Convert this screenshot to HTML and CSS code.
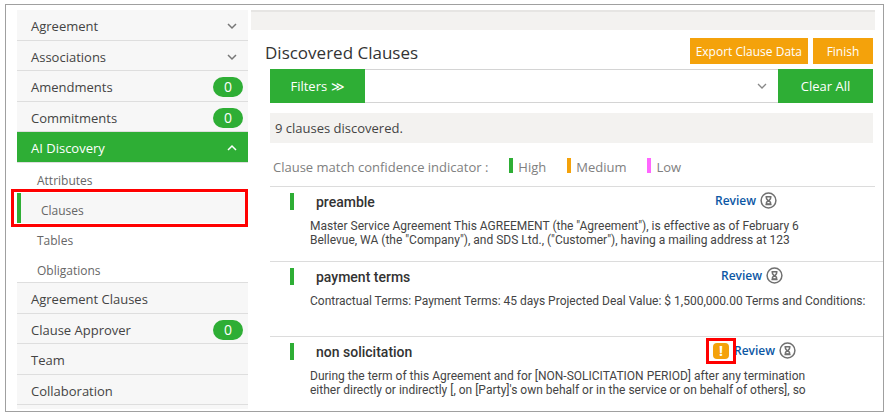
FILE: index.html
```
<!DOCTYPE html>
<html lang="en">
<head>
  <meta charset="UTF-8" />
  <meta name="viewport" content="width=device-width, initial-scale=1.0" />
  <title>Discovered Clauses</title>
  <link rel="stylesheet" href="styles.css">
</head>
<body>
  <svg class="sprite" aria-hidden="true">
    <symbol id="chevron" viewBox="0 0 10 8">
      <path d="M1 2 L5 6 L9 2" fill="none" stroke="currentColor" stroke-width="1.5" />
    </symbol>
    <symbol id="hourglass" viewBox="0 0 17 17">
      <circle cx="8.5" cy="8.5" r="7.4" fill="none" stroke="currentColor" stroke-width="1.5" />
      <path d="M5.5 4.7 H11.5 M5.5 12.5 H11.5" stroke="currentColor" stroke-width="1.6" />
      <path d="M6.5 5 V6.8 L8 8.6 L6.5 10.4 V12 H10.5 V10.4 L9 8.6 L10.5 6.8 V5" fill="none" stroke="currentColor" stroke-width="1.5" />
    </symbol>
  </svg>

  <div class="frame">
    <nav class="sidebar">
      <button class="nav-item" type="button">Agreement <svg class="chevron"><use href="#chevron" /></svg></button>
      <button class="nav-item" type="button">Associations <svg class="chevron"><use href="#chevron" /></svg></button>
      <a class="nav-item" href="#amendments">Amendments <span class="badge">0</span></a>
      <a class="nav-item" href="#commitments">Commitments <span class="badge">0</span></a>
      <button class="nav-item active" type="button">AI Discovery <svg class="chevron up"><use href="#chevron" /></svg></button>
      <div class="submenu">
        <a class="sub-item" href="#attributes">Attributes</a>
        <a class="sub-item selected" href="#clauses">Clauses</a>
        <a class="sub-item" href="#tables">Tables</a>
        <a class="sub-item" href="#obligations">Obligations</a>
      </div>
      <a class="nav-item" href="#agreement-clauses">Agreement Clauses</a>
      <a class="nav-item" href="#approver">Clause Approver <span class="badge">0</span></a>
      <a class="nav-item" href="#team">Team</a>
      <a class="nav-item" href="#collaboration">Collaboration</a>
    </nav>

    <main class="main">
      <div class="topbar"></div>
      <div class="heading">
        <h1>Discovered Clauses</h1>
        <button class="btn-orange" type="button">Export Clause Data</button>
        <button class="btn-orange" type="button">Finish</button>
      </div>
      <div class="filters">
        <button class="btn-green" type="button">Filters ≫</button>
        <select class="filter-select" aria-label="Filters">
          <option></option>
        </select>
        <button class="btn-green" type="button">Clear All</button>
      </div>
      <p class="count">9 clauses discovered.</p>
      <div class="legend">
        <span class="legend-label">Clause match confidence indicator :</span>
        <span class="level high">High</span>
        <span class="level medium">Medium</span>
        <span class="level low">Low</span>
      </div>

      <section class="clause first">
        <div class="clause-head">
          <h2>preamble</h2>
          <div class="actions">
            <a href="#review-1">Review</a>
            <svg class="hourglass"><use href="#hourglass" /></svg>
          </div>
        </div>
        <p>Master Service Agreement This AGREEMENT (the "Agreement"), is effective as of February 6<br>Bellevue, WA (the "Company"), and SDS Ltd., ("Customer"), having a mailing address at 123</p>
      </section>
      <section class="clause">
        <div class="clause-head wide">
          <h2>payment terms</h2>
          <div class="actions">
            <a href="#review-2">Review</a>
            <svg class="hourglass"><use href="#hourglass" /></svg>
          </div>
        </div>
        <p>Contractual Terms: Payment Terms: 45 days Projected Deal Value: $ 1,500,000.00 Terms and Conditions:</p>
      </section>
      <section class="clause">
        <div class="clause-head flagged">
          <h2>non solicitation</h2>
          <div class="actions">
            <span class="alert"><span class="alert-icon">!</span></span>
            <a href="#review-3">Review</a>
            <svg class="hourglass"><use href="#hourglass" /></svg>
          </div>
        </div>
        <p>During the term of this Agreement and for [NON-SOLICITATION PERIOD] after any termination<br>either directly or indirectly [, on [Party]'s own behalf or in the service or on behalf of others], so</p>
      </section>
    </main>
  </div>
</body>
</html>
```
FILE: styles.css
```
*, *::before, *::after { box-sizing: border-box; }
body {
  font-family: "Open Sans", "Noto Sans", sans-serif;
  background-color: #fff;
  color: #444;
  font-size: 13px;
  margin: 4px 8px 8px 5px;
}
button, select { font-family: inherit; }
a { text-decoration: none; }
.sprite { display: none; }
.frame {
  display: flex;
  align-items: flex-start;
  gap: 3px;
  min-height: calc(100vh - 12px);
  border: 1px solid #a0a0a0;
  padding: 5px 0 0 11px;
}

/* sidebar */
.sidebar {
  flex: 0 0 231px;
  border-bottom: 4px solid #f7f7f7;
}
.nav-item {
  display: flex;
  align-items: center;
  justify-content: space-between;
  width: 100%;
  height: 31px;
  padding: 2px 5px 0 14px;
  border: none;
  border-bottom: 1px solid #dedede;
  background-color: #f7f7f7;
  color: #444;
  font-size: 13px;
  text-align: left;
}
.nav-item:nth-child(even) { height: 30px; }
.nav-item.active {
  background-color: #2eae35;
  color: #fff;
}
.chevron {
  width: 10px;
  height: 8px;
  margin-right: 6px;
  color: #777;
}
.chevron.up {
  transform: rotate(180deg);
  color: #fff;
}
.badge {
  width: 30px;
  height: 20px;
  border-radius: 10px;
  background-color: #2eae35;
  color: #fff;
  font-size: 14px;
  line-height: 20px;
  text-align: center;
}
.submenu {
  height: 120px;
  border-bottom: 1px solid #dedede;
}
.sub-item {
  display: block;
  height: 30px;
  padding: 6px 0 0 20px;
  color: #666;
  font-size: 12px;
  line-height: 24px;
}
.sub-item.selected {
  position: relative;
  border-left: 4px solid #2eae35;
  background-color: #f7f7f7;
}
.sub-item.selected::after {
  content: "";
  position: absolute;
  inset: -4px 0 -4px -10px;
  border: 3px solid #f00;
}

/* content */
.main {
  flex: 1;
  min-width: 0;
}
.topbar {
  height: 20px;
  margin-right: 8px;
  border-top: 2px solid #e6e5e3;
  background-color: #f3f2f0;
}
.heading {
  display: flex;
  align-items: center;
  gap: 5px;
  padding: 8px 10px 5px 14px;
}
.heading h1 {
  flex: 1;
  margin: 0;
  padding-top: 4px;
  color: #333;
  font-size: 17px;
  font-weight: normal;
  line-height: 22px;
}
.btn-orange {
  min-width: 60px;
  height: 26px;
  padding: 0 6px;
  border: none;
  background-color: #f4a20b;
  color: #fff;
  font-size: 12px;
}
.filters {
  display: flex;
  height: 34px;
  margin: 0 10px 10px 19px;
}
.btn-green {
  width: 95px;
  border: none;
  background-color: #2eae35;
  color: #fff;
  font-size: 13px;
}
.filter-select {
  flex: 1;
  appearance: none;
  border: 1px solid #d4d4d4;
  border-width: 1px 0;
  border-radius: 0;
  background: #fff url("data:image/svg+xml,%3Csvg xmlns='http://www.w3.org/2000/svg' width='10' height='8'%3E%3Cpath d='M1 2L5 6L9 2' fill='none' stroke='%23888' stroke-width='1.3'/%3E%3C/svg%3E") no-repeat right 11px center;
}
.count {
  margin: 0 10px 15px 19px;
  padding-left: 5px;
  background-color: #f3f2f0;
  line-height: 30px;
}
.legend {
  display: flex;
  height: 28px;
  padding-left: 22px;
  color: #808080;
  line-height: 19px;
}
.legend-label { margin-right: 21px; }
.level {
  margin-right: 21px;
  display: flex;
  gap: 5px;
}
.level::before {
  content: "";
  width: 4px;
  height: 15px;
}
.high::before { background-color: #2eae35; }
.medium::before { background-color: #f4a20b; }
.low::before { background-color: #ff66ff; }

.clause {
  height: 75px;
  margin-left: 19px;
  padding: 6px 0 0 20px;
  border-top: 1px solid #dcdcdc;
}
.clause.first { margin-right: 8px; }
.clause-head {
  display: flex;
  height: 17px;
  border-left: 4px solid #2eae35;
  padding-left: 22px;
}
.clause h2 {
  flex: 0 0 399px;
  margin: 0;
  color: #333;
  font-family: Roboto, sans-serif;
  font-size: 14px;
  font-weight: 500;
  line-height: 19px;
}
.clause-head.wide h2 { flex-basis: 405px; }
.clause-head.flagged h2 { flex-basis: 390px; }
.actions {
  display: flex;
  align-items: center;
  gap: 4px;
  height: 15px;
}
.actions a {
  color: #0b57a4;
  font-size: 12px;
  font-weight: 600;
}
.hourglass {
  width: 17px;
  height: 17px;
  color: #707070;
}
.alert {
  margin-right: -6px;
  padding: 2px 4px;
  border: 3px solid #f00;
  background-color: #fff;
  z-index: 1;
}
.alert-icon {
  display: block;
  width: 16px;
  height: 16px;
  border-radius: 4px;
  background-color: #f4a20b;
  color: #fff;
  font-size: 14px;
  font-weight: bold;
  line-height: 16px;
  text-align: center;
}
.clause p {
  margin: 9px 0 0;
  padding-left: 20px;
  font-family: Roboto, sans-serif;
  font-size: 12px;
  line-height: 14px;
  white-space: nowrap;
}
```
